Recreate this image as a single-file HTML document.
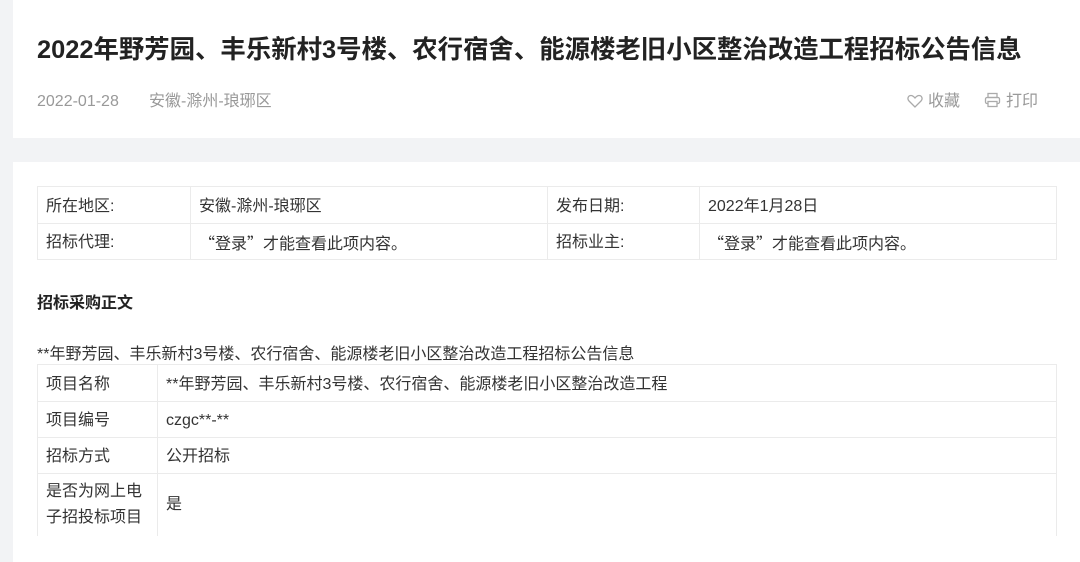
<!DOCTYPE html>
<html><head><meta charset="utf-8"><style>
*{margin:0;padding:0;box-sizing:border-box}
body{width:1080px;height:556px;overflow:hidden;background:#f2f3f5;font-family:"Liberation Sans","Noto Sans CJK SC",sans-serif;color:#333;position:relative}
.card1{position:absolute;left:13px;top:0;width:1067px;height:138px;background:#fff}
.card2{position:absolute;left:13px;top:162px;width:1067px;height:400px;background:#fff}
.title{position:absolute;left:37px;top:30px;font-size:25.4px;font-weight:bold;color:#222;white-space:nowrap}
.meta{position:absolute;top:90px;height:24px;line-height:24px;font-size:16px;color:#999;white-space:nowrap}
.meta svg{vertical-align:-2px}
table{position:absolute;border-collapse:collapse;font-size:16px;color:#333}
td{border:1px solid #ebebeb;padding:3px 8px 0;vertical-align:middle;white-space:nowrap;line-height:24px}
td.q{font-family:"Noto Sans CJK SC",sans-serif;padding-top:0}
.h{position:absolute;left:37px;top:289px;font-size:16px;font-weight:bold;color:#222}
.line{position:absolute;left:37px;top:340px;font-size:16px;white-space:nowrap}
</style></head><body>
<div class="card1"></div>
<div class="card2"></div>
<div class="title">2022年野芳园、丰乐新村3号楼、农行宿舍、能源楼老旧小区整治改造工程招标公告信息</div>
<div class="meta" style="left:37px">2022-01-28</div>
<div class="meta" style="left:149px">安徽-滁州-琅琊区</div>
<div class="meta" style="left:907px"><svg width="16" height="14" viewBox="0 0 16 14" style="margin-right:5px"><path d="M8 13L2 7C0 5 1 1.5 4 1.5C6 1.5 7 3 8 4C9 3 10 1.5 12 1.5C15 1.5 16 5 14 7Z" fill="none" stroke="#aaa" stroke-width="1.3"/></svg>收藏</div>
<div class="meta" style="left:984px"><svg width="17" height="16" viewBox="0 0 17 16" style="margin-right:5px"><rect x="4" y="1.5" width="9" height="4" fill="none" stroke="#aaa" stroke-width="1.3"/><rect x="1.5" y="5.5" width="14" height="6" rx="1.5" fill="none" stroke="#aaa" stroke-width="1.3"/><rect x="4" y="9.5" width="9" height="5" fill="#fff" stroke="#aaa" stroke-width="1.3"/></svg>打印</div>
<table style="left:37px;top:186px;width:1020px">
<tr style="height:37px"><td style="width:153px">所在地区:</td><td style="width:357px">安徽-滁州-琅琊区</td><td style="width:152px">发布日期:</td><td>2022年1月28日</td></tr>
<tr style="height:36px"><td>招标代理:</td><td class="q">“登录”才能查看此项内容。</td><td>招标业主:</td><td class="q">“登录”才能查看此项内容。</td></tr>
</table>
<div class="h">招标采购正文</div>
<div class="line">**年野芳园、丰乐新村3号楼、农行宿舍、能源楼老旧小区整治改造工程招标公告信息</div>
<table style="left:37px;top:364px;width:1020px">
<tr style="height:37px"><td style="width:120px">项目名称</td><td>**年野芳园、丰乐新村3号楼、农行宿舍、能源楼老旧小区整治改造工程</td></tr>
<tr style="height:36px"><td>项目编号</td><td>czgc**-**</td></tr>
<tr style="height:36px"><td>招标方式</td><td>公开招标</td></tr>
<tr style="height:62px"><td style="line-height:26px;border-bottom:none;white-space:normal;padding-top:0">是否为网上电子招投标项目</td><td style="border-bottom:none;padding-top:0">是</td></tr>
</table>
</body></html>
